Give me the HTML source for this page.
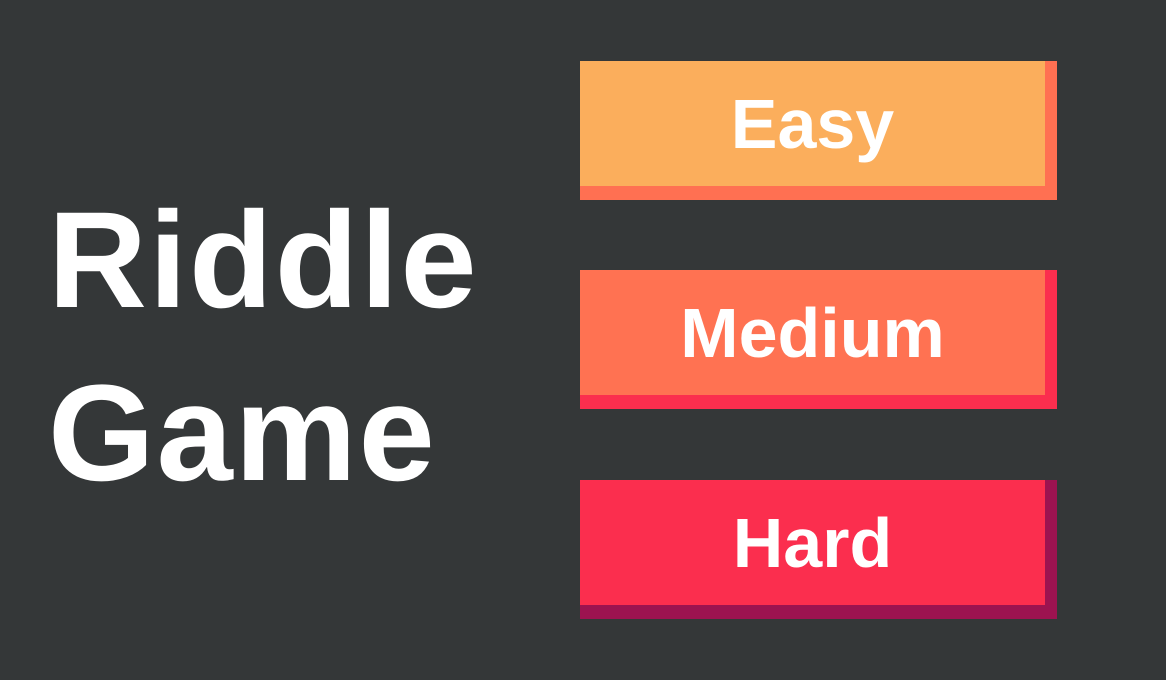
<!DOCTYPE html>
<html><head><meta charset="utf-8"><style>
html,body{margin:0;padding:0}
body{width:1166px;height:680px;background:#343738;position:relative;overflow:hidden;font-family:"Liberation Sans",sans-serif;font-weight:bold;color:#fff}
.t{position:absolute;left:48px;font-size:137px;line-height:1;letter-spacing:2px}
.b{position:absolute;left:580px;width:465px;height:125px;display:flex;align-items:center;justify-content:center;font-size:70px;border-right:12px solid;border-bottom:14px solid}
</style></head><body>
<div class="t" style="top:192px">Riddle</div>
<div class="t" style="top:365px">Game</div>
<div class="b" style="top:61px;background:#fbae5c;border-color:#ff7052">Easy</div>
<div class="b" style="top:270px;background:#ff7252;border-color:#fb2e4e">Medium</div>
<div class="b" style="top:480px;background:#fb2e4e;border-color:#9c1350">Hard</div>
</body></html>
